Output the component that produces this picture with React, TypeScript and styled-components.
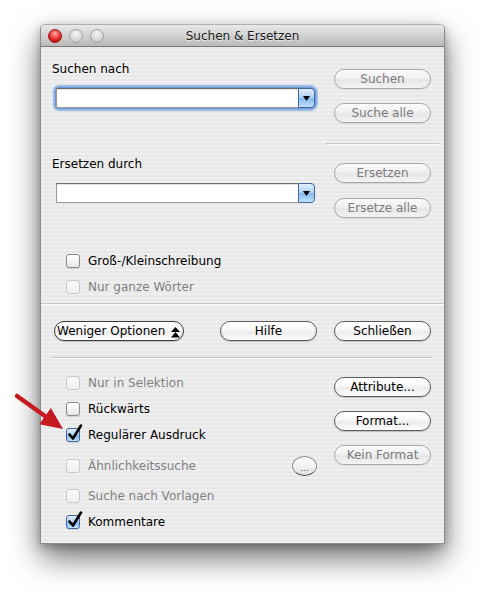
import React from 'react'
import styled, { createGlobalStyle, css } from 'styled-components'

const GlobalStyle = createGlobalStyle`
  html, body {
    margin: 0;
    padding: 0;
    background: #fff;
  }
  body {
    font-family: "DejaVu Sans", "Liberation Sans", sans-serif;
    font-size: 12px;
    color: #000;
  }
`

const Page = styled.div`
  position: relative;
  width: 485px;
  height: 598px;
  padding: 24px 40px 0 40px;
  box-sizing: border-box;
  overflow: hidden;
`

const Window = styled.div`
  width: 405px;
  height: 520px;
  box-sizing: border-box;
  display: flex;
  flex-direction: column;
  border: 1px solid #8c8c8c;
  border-top-color: #b0b0b0;
  border-radius: 5px 5px 0 0;
  background: repeating-linear-gradient(
    to bottom,
    #efefef 0px,
    #efefef 2px,
    #e8e8e8 2px,
    #e8e8e8 4px
  );
  box-shadow: 0 14px 30px rgba(0, 0, 0, 0.55), 0 3px 10px rgba(0, 0, 0, 0.25);
`

const TitleBar = styled.div`
  flex: none;
  height: 21px;
  display: grid;
  grid-template-columns: 1fr auto 1fr;
  align-items: center;
  border-radius: 4px 4px 0 0;
  background: linear-gradient(to bottom, #e9e9e9 0%, #d2d2d2 50%, #b9b9b9 100%);
  border-bottom: 1px solid #7a7a7a;
`

const Lights = styled.div`
  display: flex;
  gap: 7px;
  padding-left: 7px;
`

const Light = styled.span<{ $red?: boolean }>`
  width: 14px;
  height: 14px;
  border-radius: 50%;
  box-sizing: border-box;
  ${p =>
    p.$red
      ? css`
          border: 1px solid #9b1a1a;
          background: radial-gradient(circle at 50% 30%, #ffb0b0 0%, #f04848 40%, #c80f0f 75%, #8e0b0b 100%);
        `
      : css`
          border: 1px solid #a3a3a3;
          background: radial-gradient(circle at 50% 30%, #f6f6f6 0%, #dcdcdc 50%, #bdbdbd 100%);
        `}
`

const Title = styled.div`
  font-size: 12px;
  color: #1a1a1a;
  text-shadow: 0 1px 0 rgba(255, 255, 255, 0.6);
`

const Section = styled.div<{ $pt: number; $pb: number }>`
  display: flex;
  padding: ${p => p.$pt}px 0 ${p => p.$pb}px 11px;
`

const LeftCol = styled.div<{ $w: number }>`
  width: ${p => p.$w}px;
  display: flex;
  flex-direction: column;
`

const RightCol = styled.div<{ $ml: number; $pt: number }>`
  margin-left: ${p => p.$ml}px;
  padding-top: ${p => p.$pt}px;
  display: flex;
  flex-direction: column;
  align-items: flex-start;
`

const Label = styled.div<{ $mt?: number }>`
  height: 16px;
  line-height: 16px;
  margin-top: ${p => p.$mt ?? 0}px;
`

const Combo = styled.div<{ $focused?: boolean }>`
  display: flex;
  width: 259px;
  height: 20px;
  margin: 11px 0 0 4px;
  box-sizing: border-box;
  border-radius: 0 4px 4px 0;
  ${p =>
    p.$focused &&
    css`
      border-radius: 3px 5px 5px 3px;
      box-shadow: 0 0 0 1px #6b9ad6, 0 0 1px 3px rgba(120, 165, 225, 0.75);
    `}
`

const ComboField = styled.div`
  flex: 1;
  background: #fff;
  border: 1px solid #9a9a9a;
  border-top-color: #6e6e6e;
  border-right: none;
  box-shadow: inset 0 1px 1px rgba(0, 0, 0, 0.12);
`

const ComboArrow = styled.div`
  width: 17px;
  box-sizing: border-box;
  display: flex;
  align-items: center;
  justify-content: center;
  border: 1px solid #41679c;
  border-radius: 0 4px 4px 0;
  background: linear-gradient(to bottom, #dfeefc 0%, #b0d2f5 48%, #86b9ee 52%, #c2e0fb 100%);
`

const Button = styled.button<{ $w: number; $mt?: number; $ml?: number }>`
  width: ${p => p.$w}px;
  height: 20px;
  margin-top: ${p => p.$mt ?? 0}px;
  margin-left: ${p => p.$ml ?? 0}px;
  padding: 0;
  box-sizing: border-box;
  border-radius: 10px;
  border: 1px solid #5d5d5d;
  background: linear-gradient(to bottom, #ffffff 0%, #f7f7f7 45%, #ebebeb 55%, #fdfdfd 100%);
  box-shadow: 0 1px 1px rgba(0, 0, 0, 0.18);
  font-family: "DejaVu Sans", "Liberation Sans", sans-serif;
  font-size: 12px;
  line-height: 18px;
  color: #000;
  flex: none;

  &:disabled {
    color: #7c7c7c;
    border-color: #a9a9a9;
    background: linear-gradient(to bottom, #fbfbfb 0%, #f0f0f0 45%, #e6e6e6 55%, #f4f4f4 100%);
    box-shadow: 0 1px 1px rgba(0, 0, 0, 0.08);
  }
`

const ButtonBox = styled.div`
  margin: 0 8px;
  display: flex;
  flex-direction: column;
`

const RightSeparator = styled.div`
  width: 113px;
  height: 0;
  margin-top: 20px;
  border-top: 1px solid #c6c6c6;
  border-bottom: 1px solid #fbfbfb;
`

const Separator = styled.div<{ $inset?: boolean }>`
  height: 0;
  margin: ${p => (p.$inset ? '0 11px 0 11px' : '0')};
  border-top: 1px solid #c4c4c4;
  border-bottom: 1px solid #fbfbfb;
`

const ButtonRow = styled.div`
  display: flex;
  align-items: center;
  padding: 16px 13px 16px 13px;
`

const OptionsButton = styled.button`
  width: 130px;
  height: 20px;
  padding: 0 0 0 2px;
  box-sizing: border-box;
  display: flex;
  align-items: center;
  gap: 6px;
  border-radius: 10px;
  border: 1px solid #3c3c3c;
  background: linear-gradient(to bottom, #ffffff 0%, #f7f7f7 45%, #ececec 55%, #fdfdfd 100%);
  box-shadow: 0 1px 1px rgba(0, 0, 0, 0.2);
  font-family: "DejaVu Sans", "Liberation Sans", sans-serif;
  font-size: 12px;
  color: #000;

  svg {
    margin-top: 2px;
  }
`

const CheckList = styled.div<{ $mt: number }>`
  display: flex;
  flex-direction: column;
  gap: 6px;
  margin-top: ${p => p.$mt}px;
  padding-left: 14px;
`

const CheckRow = styled.div<{ $h?: number }>`
  height: ${p => p.$h ?? 20}px;
  display: flex;
  align-items: center;
  gap: 8px;
`

const Box = styled.span<{ $checked?: boolean; $disabled?: boolean }>`
  position: relative;
  width: 14px;
  height: 14px;
  flex: none;
  box-sizing: border-box;
  border-radius: 3px;
  border: 1px solid #8a8a8a;
  background: linear-gradient(to bottom, #ffffff 0%, #f4f4f4 50%, #e6e6e6 100%);
  box-shadow: 0 1px 1px rgba(0, 0, 0, 0.12);
  ${p =>
    p.$disabled &&
    css`
      border-color: #c9c9c9;
      background: linear-gradient(to bottom, #f9f9f9 0%, #f0f0f0 100%);
      box-shadow: none;
    `}
  ${p =>
    p.$checked &&
    css`
      border-color: #40689e;
      background: linear-gradient(to bottom, #e4f1fd 0%, #a9cdf3 50%, #7fb4ec 55%, #c6e2fb 100%);
    `}
`

const CheckMark = styled.svg`
  position: absolute;
  left: 1px;
  top: -5px;
`

const CheckText = styled.span<{ $disabled?: boolean }>`
  color: ${p => (p.$disabled ? '#7f7f7f' : '#000')};
  white-space: nowrap;
`

const DotsButton = styled.button`
  margin-left: auto;
  width: 25px;
  height: 20px;
  padding: 0;
  box-sizing: border-box;
  border-radius: 50%;
  border: 1px solid #8e8e8e;
  border-bottom-color: #4a4a4a;
  background: linear-gradient(to bottom, #ffffff 0%, #f2f2f2 50%, #e3e3e3 100%);
  font-family: "DejaVu Sans", "Liberation Sans", sans-serif;
  font-size: 9px;
  color: #555;
  line-height: 22px;
`

const Overlay = styled.svg`
  position: absolute;
  left: 0;
  top: 0;
  pointer-events: none;
`

const Check = ({ label, checked, disabled, h, children }: { label: string; checked?: boolean; disabled?: boolean; h?: number; children?: React.ReactNode }) => (
  <CheckRow $h={h}>
    <Box $checked={checked} $disabled={disabled}>
      {checked && (
        <CheckMark width="15" height="17" viewBox="0 0 15 17">
          <path d="M1.5 10.5 L5 14.5 L13 1.5" fill="none" stroke="#000" strokeWidth="2.6" strokeLinecap="round" strokeLinejoin="round" />
        </CheckMark>
      )}
    </Box>
    <CheckText $disabled={disabled}>{label}</CheckText>
    {children}
  </CheckRow>
)

const ComboBox = ({ focused }: { focused?: boolean }) => (
  <Combo $focused={focused}>
    <ComboField />
    <ComboArrow>
      <svg width="7" height="5" viewBox="0 0 7 5">
        <path d="M0 0 H7 L3.5 5 Z" fill="#000" />
      </svg>
    </ComboArrow>
  </Combo>
)

export default function App() {
  return (
    <Page>
      <GlobalStyle />
      <Window>
        <TitleBar>
          <Lights>
            <Light $red />
            <Light />
            <Light />
          </Lights>
          <Title>Suchen &amp; Ersetzen</Title>
          <div />
        </TitleBar>

        <Section $pt={14} $pb={6}>
          <LeftCol $w={263}>
            <Label>Suchen nach</Label>
            <ComboBox focused />
            <Label $mt={48}>Ersetzen durch</Label>
            <ComboBox />
            <CheckList $mt={48}>
              <Check label="Groß-/Kleinschreibung" />
              <Check label="Nur ganze Wörter" disabled />
            </CheckList>
          </LeftCol>
          <RightCol $ml={11} $pt={8}>
            <ButtonBox>
              <Button $w={97} disabled>Suchen</Button>
              <Button $w={97} $mt={14} disabled>Suche alle</Button>
            </ButtonBox>
            <RightSeparator />
            <ButtonBox>
              <Button $w={97} $mt={18} disabled>Ersetzen</Button>
              <Button $w={97} $mt={15} disabled>Ersetze alle</Button>
            </ButtonBox>
          </RightCol>
        </Section>

        <Separator />

        <ButtonRow>
          <OptionsButton>
            <span>Weniger Optionen</span>
            <svg width="9" height="11" viewBox="0 0 9 11">
              <path d="M4.5 0 L9 5 H0 Z" fill="#000" />
              <path d="M4.5 5 L9 10.5 H0 Z" fill="#000" />
            </svg>
          </OptionsButton>
          <Button $w={97} $ml={36}>Hilfe</Button>
          <Button $w={97} $ml={17}>Schließen</Button>
        </ButtonRow>

        <Separator $inset />

        <Section $pt={14} $pb={0}>
          <LeftCol $w={265}>
            <CheckList $mt={0}>
              <Check label="Nur in Selektion" disabled />
              <Check label="Rückwärts" />
              <Check label="Regulärer Ausdruck" checked />
              <Check label="Ähnlichkeitssuche" disabled h={29}>
                <DotsButton disabled>...</DotsButton>
              </Check>
              <Check label="Suche nach Vorlagen" disabled />
              <Check label="Kommentare" checked />
            </CheckList>
          </LeftCol>
          <RightCol $ml={17} $pt={4}>
            <Button $w={97}>Attribute...</Button>
            <Button $w={97} $mt={14}>Format...</Button>
            <Button $w={97} $mt={14} disabled>Kein Format</Button>
          </RightCol>
        </Section>
      </Window>

      <Overlay width="485" height="598" viewBox="0 0 485 598">
        <line x1="17" y1="396" x2="47" y2="417.5" stroke="#c51a20" strokeWidth="4.5" strokeLinecap="round" />
        <polygon points="63,429 39.3,424.3 50.9,408.1" fill="#c51a20" />
      </Overlay>
    </Page>
  )
}
